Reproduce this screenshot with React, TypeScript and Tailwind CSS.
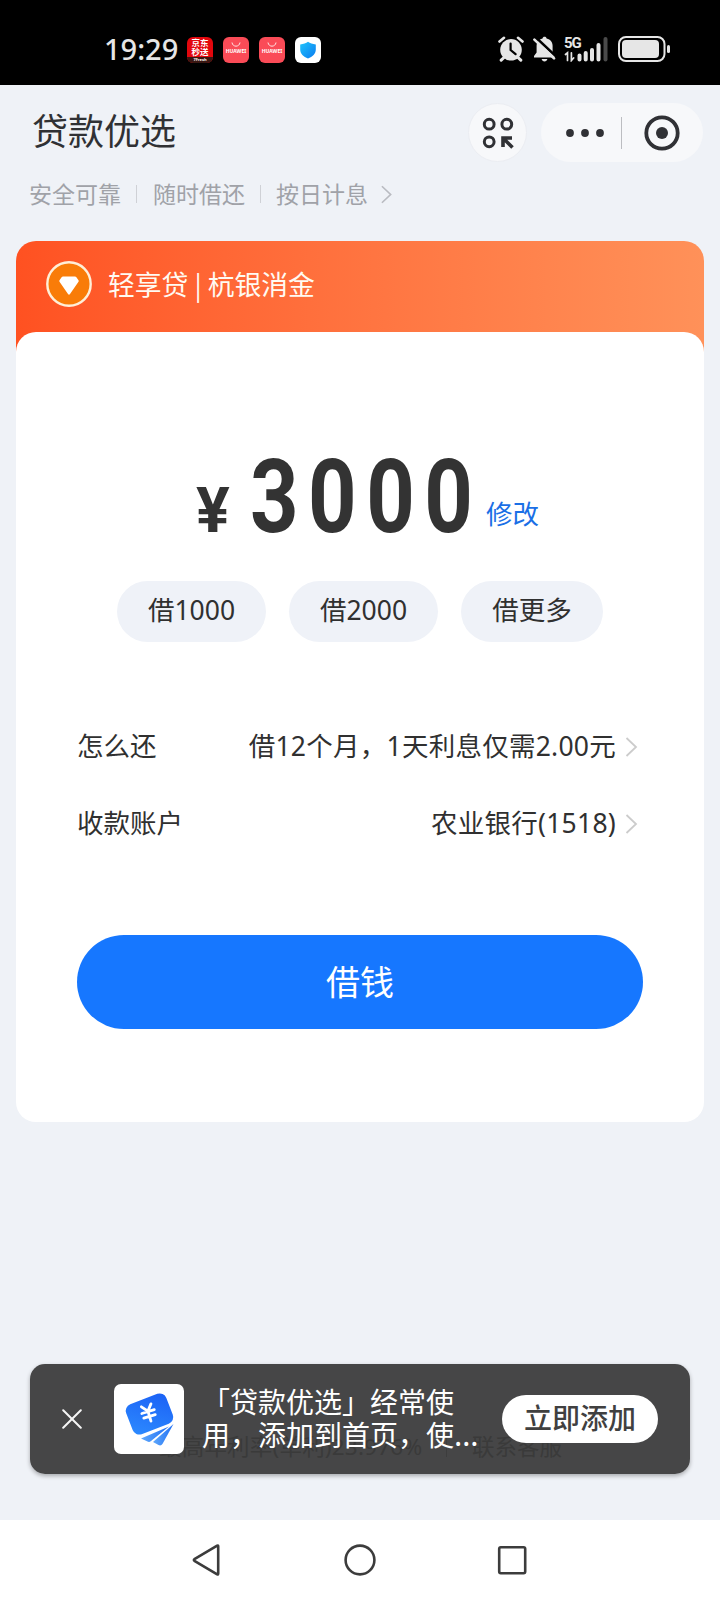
import React from 'react';

function ChevronRight({ className }: { className?: string }) {
  return (
    <svg viewBox="0 0 12 20" className={className} fill="none" stroke="currentColor" strokeWidth="1.8">
      <path d="M1 1L10.5 10L1 19" />
    </svg>
  );
}

function HuaweiIcon() {
  return (
    <div className="flex h-[26px] w-[26px] flex-col items-center rounded-[6px] bg-[#fa4b57] pt-[5px]">
      <svg width="10" height="6" viewBox="0 0 10 6" fill="none" stroke="#ffe4e4" strokeWidth="1">
        <path d="M1 0.5C1.6 5.4 8.4 5.4 9 0.5" />
      </svg>
      <span className="text-[5px] font-bold leading-[7px] text-white">HUAWEI</span>
    </div>
  );
}

function StatusBar() {
  return (
    <div className="flex h-[85px] items-start bg-black pl-[104px] text-[#e6e6e6]">
      <span className="mt-[28px] w-[83px] text-[29px] font-medium leading-[42px]">19:29</span>

      <div className="mt-[37px] flex gap-[10px]">
        <div className="h-[26px] w-[26px] overflow-hidden rounded-[6px] bg-[#e3070d] text-center text-[8.5px] font-bold leading-[9px] text-white">
          <div className="pt-px">京东</div>
          <div>秒送</div>
          <div className="mt-px h-[6px] bg-[#3a1712] text-[4px] leading-[5px]">7Fresh</div>
        </div>
        <HuaweiIcon />
        <HuaweiIcon />
        <div className="flex h-[26px] w-[26px] items-center justify-center rounded-[6px] bg-white">
          <svg width="18" height="18" viewBox="0 0 18 18">
            <defs>
              <linearGradient id="shield" x1="0" y1="0" x2="1" y2="1">
                <stop offset="0" stopColor="#20c4fb" />
                <stop offset="1" stopColor="#0a7bf0" />
              </linearGradient>
            </defs>
            <path d="M9 0.8C11 2.4 13.5 3.2 16.8 3.4V8.5C16.8 13 13.5 15.8 9 17.4C4.5 15.8 1.2 13 1.2 8.5V3.4C4.5 3.2 7 2.4 9 0.8Z" fill="url(#shield)" />
          </svg>
        </div>
      </div>

      <div className="ml-[177px] mt-[36px] flex">
        {/* alarm */}
        <svg width="26" height="26" viewBox="0 0 26 26" fill="none" stroke="#e6e6e6" strokeLinecap="round">
          <path d="M1.5 5.5L6 1.8M24.5 5.5L20 1.8" strokeWidth="2.6" />
          <path d="M6 21.5L3.2 24.2M20 21.5L22.8 24.2" strokeWidth="3" />
          <circle cx="13" cy="13.8" r="10.8" fill="#e6e6e6" stroke="none" />
          <path d="M12.6 7.6V14L17.6 18.2" stroke="#000" strokeWidth="2.2" />
        </svg>
        {/* muted bell */}
        <svg className="ml-[9px]" width="24" height="26" viewBox="0 0 24 26">
          <path d="M11.5 0.8C12.7 0.8 13.4 1.4 13.6 2.4C17.6 3.2 19.6 6.2 19.6 10V16.5L22 20V21.5H1V20L3.6 16.5V10C3.6 6.2 5.6 3.2 9.5 2.4C9.8 1.4 10.4 0.8 11.5 0.8Z" fill="#e6e6e6" />
          <path d="M8.6 23H14.4C14 24.6 13 25.4 11.5 25.4C10 25.4 9 24.6 8.6 23Z" fill="#e6e6e6" />
          <path d="M2.6 1.2L23 20.4" stroke="#000" strokeWidth="2.6" />
          <path d="M1.4 3.6L21 22.4" stroke="#e6e6e6" strokeWidth="2.6" strokeLinecap="round" />
        </svg>
        {/* signal */}
        <div className="ml-[7px] h-[26px] w-[44px]">
          <div className="h-[13px] font-['Roboto'] text-[15px] font-bold leading-[14px] tracking-[-1px]">5G</div>
          <svg className="-mt-[13px]" width="44" height="26" viewBox="0 0 44 26" fill="none" stroke="#e6e6e6" strokeLinecap="round">
            <path d="M1.5 18.5L3.5 16.8V24.5M7.4 16.8V24.5L9.6 22" strokeWidth="1.7" />
            <path d="M15.5 19.5V23.4M21.7 17V23.4M28 14V23.4M34.5 9V23.4" strokeWidth="4" />
            <path d="M41.5 3V23.4" stroke="#4a4a4a" strokeWidth="4" />
          </svg>
        </div>
        {/* battery */}
        <svg className="ml-[10px]" width="53" height="26" viewBox="0 0 53 26">
          <rect x="1" y="1" width="45.5" height="24" rx="7" fill="none" stroke="#e6e6e6" strokeWidth="2" />
          <rect x="4" y="4" width="37" height="18" rx="4" fill="#e6e6e6" />
          <rect x="49" y="9" width="3" height="8" rx="1.5" fill="#e6e6e6" />
        </svg>
      </div>
    </div>
  );
}

function Header() {
  return (
    <div className="flex items-start pl-[32px] pr-[17px] pt-[18px]">
      <h1 className="flex-1 text-[36px] leading-[58px] text-[#303134]">贷款优选</h1>
      <div className="flex h-[59px] w-[59px] items-center justify-center rounded-full border border-[#ebedf2] bg-[#f7f8fa]">
        <svg width="32" height="32" viewBox="0 0 32 32" fill="none" stroke="#303135" strokeWidth="3">
          <circle cx="7.2" cy="7.2" r="4.9" />
          <circle cx="24.8" cy="7.2" r="4.9" />
          <circle cx="7.2" cy="24.8" r="4.9" />
          <path d="M21 30V21H30M21 21L30.5 30.5" strokeWidth="3.6" />
        </svg>
      </div>
      <div className="ml-[14px] flex h-[59px] w-[162px] items-center rounded-full bg-[#f7f8fa]">
        <svg className="ml-[25px]" width="38" height="8" viewBox="0 0 38 8" fill="#303135">
          <circle cx="4" cy="4" r="3.9" />
          <circle cx="19" cy="4" r="3.9" />
          <circle cx="34" cy="4" r="3.9" />
        </svg>
        <div className="ml-[17px] h-[32px] w-px bg-[#bcbdc1]" />
        <svg className="ml-[22px]" width="36" height="36" viewBox="0 0 36 36">
          <circle cx="18" cy="18" r="15.7" fill="none" stroke="#303135" strokeWidth="3.8" />
          <circle cx="18" cy="18" r="6" fill="#303135" />
        </svg>
      </div>
    </div>
  );
}

function Slogan() {
  return (
    <div className="mt-[15px] flex h-[34px] items-center pl-[29px] text-[23px] leading-[34px] text-[#a0a2a8]">
      <span className="w-[92px]">安全可靠</span>
      <div className="ml-[15px] mr-[16px] h-[18px] w-px bg-[#cfd1d6]" />
      <span className="w-[92px]">随时借还</span>
      <div className="ml-[15px] mr-[15px] h-[18px] w-px bg-[#cfd1d6]" />
      <span className="w-[92px]">按日计息</span>
      <ChevronRight className="ml-[13px] h-[19px] w-[11px] text-[#b9bbc1]" />
    </div>
  );
}

function InfoRow({ label, value }: { label: string; value: string }) {
  return (
    <div className="flex h-[77px] items-center text-[26.5px] text-[#303030]">
      <span>{label}</span>
      <span className="ml-auto tracking-[0.25px]">{value}</span>
      <ChevronRight className="ml-[9px] mr-[5px] h-[20px] w-[13px] text-[#cccccc]" />
    </div>
  );
}

function LoanCard() {
  return (
    <div className="mx-[16px] mt-[30px]">
      <div className="flex h-[116px] items-start rounded-t-[20px] bg-linear-to-r from-[#ff5121] to-[#ff9159] pl-[30px] pt-[20px]">
        <svg width="46" height="46" viewBox="0 0 46 46">
          <circle cx="23" cy="23" r="21.7" fill="#f97c08" stroke="#ffefd8" strokeWidth="2.4" />
          <path d="M17 15.4H29Q29.8 15.4 30.4 16.2L32.5 19.2Q33 20 32.5 20.8L24 33Q23 34.6 22 33L13.5 20.8Q13 20 13.5 19.2L15.6 16.2Q16.2 15.4 17 15.4Z" fill="#fff" />
        </svg>
        <span className="ml-[16px] mt-[3px] font-['Noto_Sans_CJK_SC',sans-serif] text-[26.8px] leading-[40px] text-[#fffaf2]">轻享贷 | 杭银消金</span>
      </div>

      <div className="-mt-[25px] h-[790px] rounded-[20px] bg-white px-[61px] pt-[113px]">
        <div className="flex h-[100px] items-end pl-[119px]">
          <span className="mb-[2px] w-[54px] font-['Roboto'] text-[63px] font-bold leading-[64px] text-[#333333]">¥</span>
          <span className="-mb-[2px] w-[236px] origin-left scale-x-[0.83] whitespace-nowrap font-['Roboto'] text-[102px] font-bold leading-[100px] tracking-[11.5px] text-[#333333]">3000</span>
          <span className="mb-[11px] text-[26.5px] leading-[40px] text-[#1a6fe6]">修改</span>
        </div>

        <div className="mt-[36px] flex justify-center gap-[23px] text-[26.5px] leading-[58px] text-[#303030]">
          <div className="h-[61px] w-[149px] rounded-full bg-[#eff2f8] text-center">借1000</div>
          <div className="h-[61px] w-[149px] rounded-full bg-[#eff2f8] text-center">借2000</div>
          <div className="h-[61px] w-[142px] rounded-full bg-[#eff2f8] text-center">借更多</div>
        </div>

        <div className="mt-[66px]">
          <InfoRow label="怎么还" value="借12个月，1天利息仅需2.00元" />
          <InfoRow label="收款账户" value="农业银行(1518)" />
        </div>

        <button className="mt-[73px] flex h-[94px] w-full items-center justify-center rounded-full bg-[#1677ff] text-[34px] text-white">
          借钱
        </button>
      </div>
    </div>
  );
}

function FooterNote() {
  return (
    <div className="flex h-[34px] items-center pl-[159px] text-[22.5px] leading-[34px] text-[#777777]">
      <span className="w-[287px] tracking-[0.2px]">最高年利率(单利)23.976%</span>
      <div className="h-[20px] w-px bg-[#999999]" />
      <span className="ml-[25px]">联系客服</span>
    </div>
  );
}

function AddToast() {
  return (
    <div className="absolute left-[30px] top-[1364px] flex h-[110px] w-[660px] items-center rounded-[15px] bg-[#333333e6] shadow-[0_2px_4px_rgba(0,0,0,0.3)]">
      <svg className="ml-[32px]" width="20" height="20" viewBox="0 0 20 20" stroke="#f5f5f5" strokeWidth="2" strokeLinecap="round">
        <path d="M1.2 1.2L18.8 18.8M18.8 1.2L1.2 18.8" />
      </svg>
      <svg className="ml-[32px] rounded-[7px] bg-white" width="70" height="70" viewBox="0 0 70 70">
        <defs>
          <linearGradient id="card" x1="0" y1="1" x2="1" y2="0">
            <stop offset="0" stopColor="#2d8bff" />
            <stop offset="1" stopColor="#1b60f5" />
          </linearGradient>
          <linearGradient id="fan" x1="0" y1="0" x2="1" y2="0">
            <stop offset="0" stopColor="#5fa8fb" />
            <stop offset="1" stopColor="#1f6ff5" />
          </linearGradient>
        </defs>
        <path d="M27 54.5L55 42.5L37 57Q35.5 58.4 33.5 57.6Z" fill="url(#fan)" />
        <path d="M39 58L59.5 40L48.6 59.8Q47 62.3 44.5 61Z" fill="url(#fan)" />
        <rect x="14" y="14" width="43" height="32" rx="7" fill="url(#card)" transform="rotate(-21 35.5 30)" />
        <g fill="none" stroke="#fff" strokeWidth="2.8" strokeLinecap="round" transform="rotate(-17 34.5 29)">
          <path d="M29.5 21L34.5 27L39.5 21M34.5 27V37.5M28 27.5H41M28.5 32.5H40.5" />
        </g>
      </svg>
      <div className="ml-[18px] w-[284px] whitespace-nowrap text-[28px] leading-[33px] text-white">
        <div>「贷款优选」经常使</div>
        <div>
          用，添加到首页，使<span className="text-[31px] leading-none">…</span>
        </div>
      </div>
      <button className="ml-[16px] flex h-[48px] w-[156px] items-center justify-center rounded-full bg-white pb-[2px] text-[28px] font-medium leading-[40px] text-[#404040]">
        立即添加
      </button>
    </div>
  );
}

function NavBar() {
  return (
    <div className="mt-auto flex h-[80px] items-center bg-white pl-[190px]">
      <svg width="32" height="34" viewBox="0 0 32 34" fill="none" stroke="#3c3c3c" strokeWidth="2.6" strokeLinejoin="round">
        <path d="M4.4 16.2L27.2 2.6Q28.2 2.2 28.2 3.4V30.6Q28.2 31.8 27.2 31.4L4.4 17.8Q3.4 17 4.4 16.2Z" />
      </svg>
      <svg className="ml-[121px]" width="34" height="34" viewBox="0 0 34 34" fill="none" stroke="#3c3c3c" strokeWidth="2.6">
        <circle cx="17" cy="17" r="14.4" />
      </svg>
      <svg className="ml-[120px]" width="30" height="30" viewBox="0 0 30 30" fill="none" stroke="#3c3c3c" strokeWidth="2.6">
        <rect x="2.2" y="2.2" width="26" height="26" rx="1.6" />
      </svg>
    </div>
  );
}

export default function App() {
  return (
    <div className="relative flex h-[1600px] w-[720px] flex-col overflow-hidden bg-[#eff2f7] font-['Noto_Sans','Noto_Sans_CJK_SC',sans-serif]">
      <StatusBar />
      <Header />
      <Slogan />
      <LoanCard />
      <div className="mt-[308px]">
        <FooterNote />
      </div>
      <AddToast />
      <NavBar />
    </div>
  );
}
